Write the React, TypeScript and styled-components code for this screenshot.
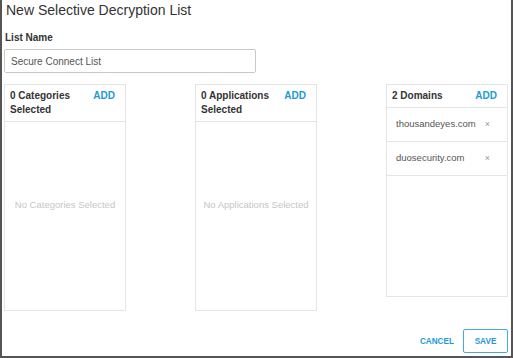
import React from "react";
import styled, { createGlobalStyle } from "styled-components";

const GlobalStyle = createGlobalStyle`
  html, body { margin: 0; padding: 0; background: #fff; }
  body { font-family: "Liberation Sans", Arial, sans-serif; }
  * { box-sizing: border-box; }
`;

const BLUE = "#1d9ad6";
const LINE = "#e4e4e4";

const Frame = styled.div`
  width: 513px;
  height: 358px;
  border-left: 2px solid #555;
  border-right: 2px solid #555;
  border-bottom: 2px solid #555;
  padding: 0 3px 0 2px;
  display: flex;
  flex-direction: column;
  background: #fff;
`;

const Title = styled.h1`
  margin: 2px 0 0 2px;
  font-size: 14px;
  line-height: 16px;
  font-weight: 400;
  color: #333;
`;

const Label = styled.label`
  display: block;
  margin: 14px 0 0 1px;
  font-size: 10px;
  line-height: 12px;
  font-weight: 700;
  color: #333;
`;

const TextInput = styled.input`
  margin-top: 5px;
  width: 252px;
  height: 24px;
  border: 1px solid #c9c9c9;
  border-radius: 2px;
  padding: 0 6px;
  font-family: "Liberation Sans", Arial, sans-serif;
  font-size: 10px;
  color: #555;
  outline: none;
`;

const Panels = styled.div`
  margin-top: 11px;
  display: flex;
  justify-content: space-between;
  align-items: flex-start;
`;

const Panel = styled.section<{ $height: number }>`
  width: 122px;
  height: ${(p) => p.$height}px;
  border: 1px solid ${LINE};
  display: flex;
  flex-direction: column;
`;

const PanelHeader = styled.header`
  display: flex;
  justify-content: space-between;
  align-items: flex-start;
  gap: 6px;
  padding: 4px 10px 4px 5px;
  border-bottom: 1px solid ${LINE};
  line-height: 14px;
`;

const HeaderTitle = styled.span`
  font-size: 10px;
  font-weight: 700;
  color: #333;
`;

const AddButton = styled.button`
  flex: none;
  background: none;
  border: none;
  padding: 0;
  font-family: "Liberation Sans", Arial, sans-serif;
  font-size: 10px;
  line-height: 14px;
  font-weight: 700;
  color: ${BLUE};
`;

const EmptyBody = styled.div`
  flex: 1;
  display: flex;
  align-items: center;
  justify-content: center;
  padding-bottom: 24px;
  font-size: 9.5px;
  color: #c6c6c6;
`;

const Row = styled.div`
  height: 34px;
  border-bottom: 1px solid ${LINE};
  display: flex;
  align-items: center;
  justify-content: space-between;
  padding: 0 17px 2px 9px;
  font-size: 9.5px;
  color: #555;
`;

const Remove = styled.span`
  font-size: 9px;
  color: #9a9a9a;
`;

const Footer = styled.footer`
  margin-top: 18px;
  display: flex;
  justify-content: flex-end;
  align-items: center;
  gap: 9px;
`;

const TextButton = styled.button`
  background: none;
  border: none;
  padding: 0;
  font-family: "Liberation Sans", Arial, sans-serif;
  font-size: 8.2px;
  font-weight: 700;
  color: ${BLUE};
`;

const SaveButton = styled(TextButton)`
  width: 45px;
  height: 24px;
  border: 1px solid #4aa9dc;
  border-radius: 2px;
  background: #fff;
`;

type PanelData = {
  title: string;
  empty?: string;
  items?: string[];
  height: number;
};

const panels: PanelData[] = [
  { title: "0 Categories Selected", empty: "No Categories Selected", height: 227 },
  { title: "0 Applications Selected", empty: "No Applications Selected", height: 227 },
  { title: "2 Domains", items: ["thousandeyes.com", "duosecurity.com"], height: 213 },
];

export default function App() {
  return (
    <>
      <GlobalStyle />
      <Frame>
        <Title>New Selective Decryption List</Title>
        <Label htmlFor="list-name">List Name</Label>
        <TextInput id="list-name" readOnly value="Secure Connect List" />
        <Panels>
          {panels.map((p) => (
            <Panel key={p.title} $height={p.height}>
              <PanelHeader>
                <HeaderTitle>{p.title}</HeaderTitle>
                <AddButton>ADD</AddButton>
              </PanelHeader>
              {p.items ? (
                p.items.map((item) => (
                  <Row key={item}>
                    <span>{item}</span>
                    <Remove>×</Remove>
                  </Row>
                ))
              ) : (
                <EmptyBody>{p.empty}</EmptyBody>
              )}
            </Panel>
          ))}
        </Panels>
        <Footer>
          <TextButton>CANCEL</TextButton>
          <SaveButton>SAVE</SaveButton>
        </Footer>
      </Frame>
    </>
  );
}
